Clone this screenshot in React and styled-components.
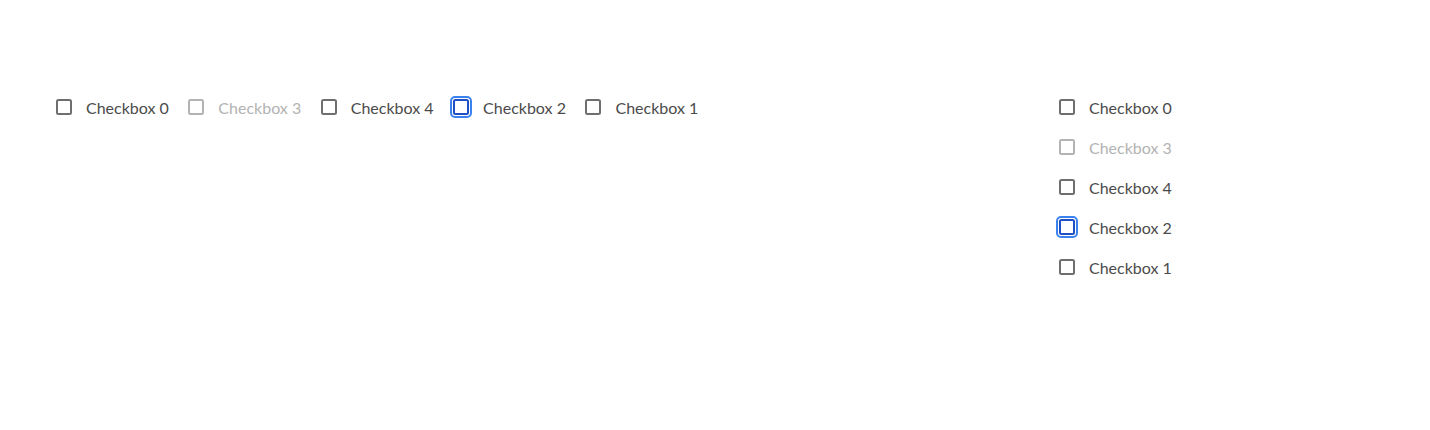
import React from "react";
import styled, { createGlobalStyle, css } from "styled-components";

const Global = createGlobalStyle`
  html, body { margin: 0; padding: 0; background: #ffffff; }
  body { font-family: Lato, "Liberation Sans", sans-serif; }
`;

const Page = styled.div`
  display: grid;
  grid-template-columns: 1003px auto;
  align-items: start;
  padding: 97px 0 0 56px;
`;

const Group = styled.div`
  display: flex;
  flex-direction: ${(p) => (p.$vertical ? "column" : "row")};
  column-gap: 19.5px;
  row-gap: 20px;
`;

const Item = styled.label`
  display: flex;
  align-items: center;
  height: 20px;
  gap: 14px;
  color: ${(p) => (p.$disabled ? "#b3b3b3" : "#4b4b4b")};
  font-size: 16px;
`;

const Box = styled.span`
  position: relative;
  width: 16px;
  height: 16px;
  box-sizing: border-box;
  border-radius: 2.5px;
  border: 2px solid ${(p) => (p.$disabled ? "#b3b3b3" : p.$focus ? "#1f4fc2" : "#6e6e6e")};
  ${(p) =>
    p.$focus &&
    css`
      &::after {
        content: "";
        position: absolute;
        inset: -5px;
        border: 2px solid #3b82f0;
        border-radius: 5px;
      }
    `}
`;

const items = [
  { label: "Checkbox 0" },
  { label: "Checkbox 3", disabled: true },
  { label: "Checkbox 4" },
  { label: "Checkbox 2", focus: true },
  { label: "Checkbox 1" },
];

function CheckboxGroup({ vertical }) {
  return (
    <Group $vertical={vertical}>
      {items.map((it) => (
        <Item key={it.label} $disabled={it.disabled}>
          <Box $disabled={it.disabled} $focus={it.focus} />
          <span>{it.label}</span>
        </Item>
      ))}
    </Group>
  );
}

export default function App() {
  return (
    <>
      <Global />
      <Page>
        <CheckboxGroup />
        <CheckboxGroup vertical />
      </Page>
    </>
  );
}
